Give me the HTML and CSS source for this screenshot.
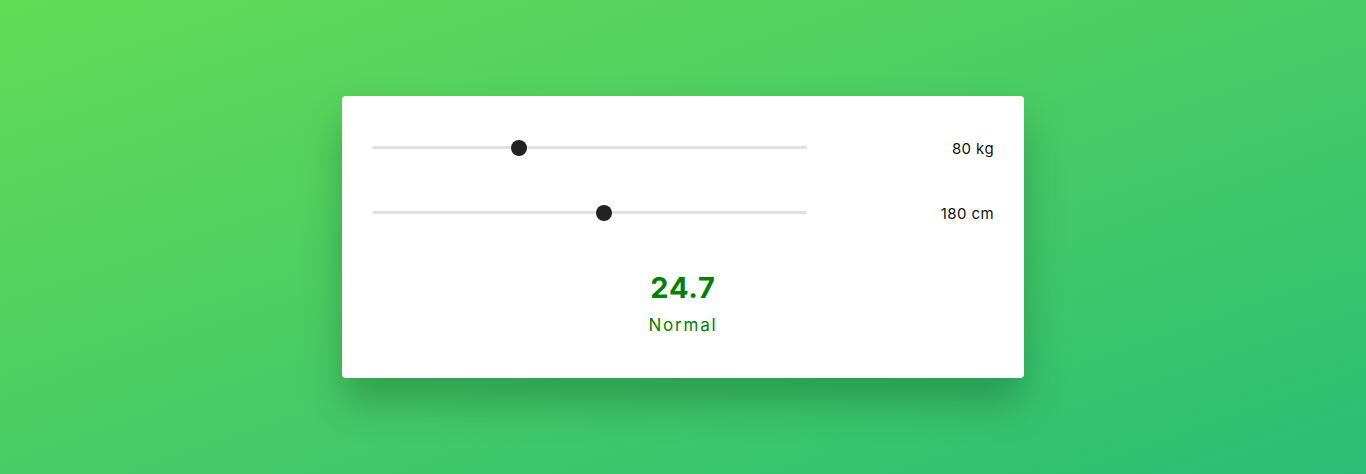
FILE: index.html
```html
<!DOCTYPE html>
<html lang="en">
<head>
<meta charset="utf-8">
<title>BMI Calculator</title>
<link rel="stylesheet" href="styles.css">
</head>
<body>
<main class="page">
  <section class="card">
    <div class="row">
      <div class="slider">
        <div class="track"></div>
        <div class="thumb" style="left: 33.8%"></div>
      </div>
      <div class="value">80 kg</div>
    </div>
    <div class="row">
      <div class="slider">
        <div class="track"></div>
        <div class="thumb" style="left: 53.3%"></div>
      </div>
      <div class="value">180 cm</div>
    </div>
    <div class="result">
      <div class="bmi">24.7</div>
      <div class="status">Normal</div>
    </div>
  </section>
</main>
</body>
</html>
```

FILE: styles.css
```css
* { box-sizing: border-box; }
html, body { margin: 0; height: 100%; }
body {
  font-family: "Inter", "Lato", sans-serif;
  background: linear-gradient(to bottom right, #63db56 0%, #2cbd75 100%);
  overflow: hidden;
}
.page {
  height: 100%;
  display: flex;
  justify-content: center;
  padding-top: 96px;
}
.card {
  width: 682px;
  height: 282px;
  background: #fff;
  border-radius: 4px;
  box-shadow: 0 24px 40px rgba(0, 60, 20, 0.3);
  padding: 36px 30px 0;
}
.row {
  display: flex;
  align-items: center;
  height: 32px;
  margin-bottom: 33px;
}
.slider {
  position: relative;
  width: 70%;
  height: 16px;
}
.track {
  position: absolute;
  left: 0; right: 0;
  top: 6px;
  height: 3px;
  background: #e1e1e1;
  border-radius: 2px;
}
.thumb {
  position: absolute;
  top: 0;
  width: 16px;
  height: 16px;
  margin-left: -8px;
  border-radius: 50%;
  background: #222;
}
.value {
  flex: 1;
  text-align: right;
  font-size: 15px;
  letter-spacing: 0.4px;
  color: #111;
}
.result {
  text-align: center;
  padding-top: 8px;
  color: #008000;
}
.bmi {
  font-size: 29px;
  font-weight: 700;
  line-height: 36px;
  letter-spacing: 0.8px;
}
.status {
  margin-top: 7px;
  font-size: 17px;
  letter-spacing: 1.8px;
  line-height: 24px;
}
```
